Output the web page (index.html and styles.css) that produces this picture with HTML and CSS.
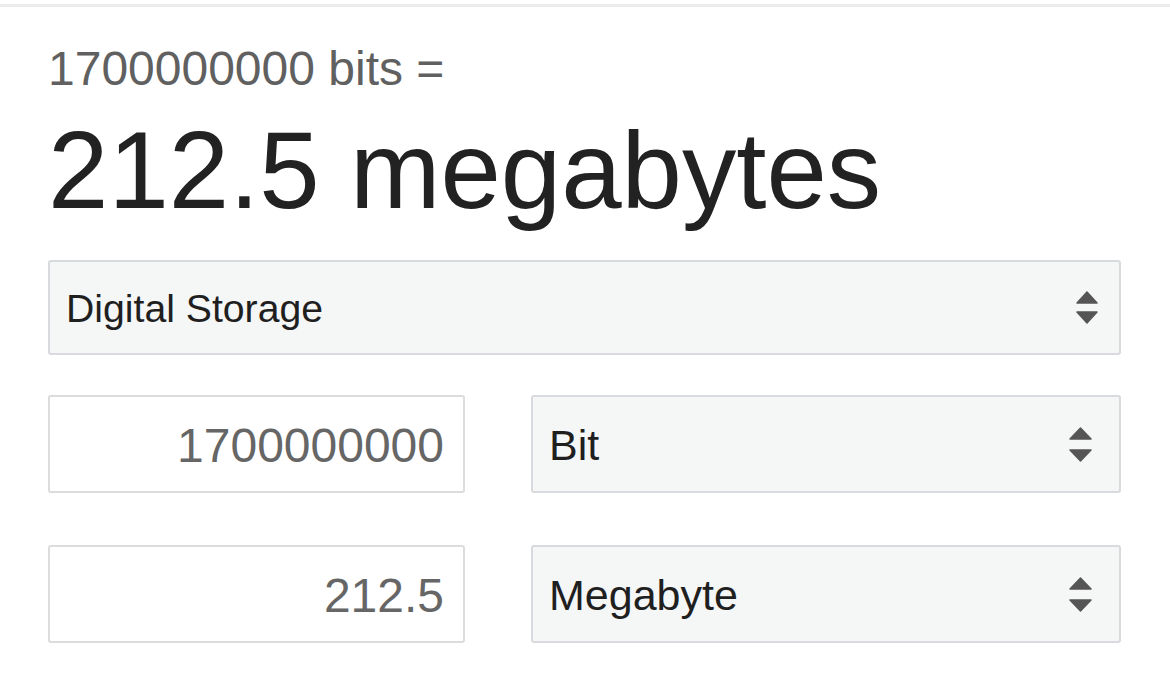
FILE: index.html
```html
<!DOCTYPE html>
<html>
<head>
<meta charset="utf-8">
<link rel="stylesheet" href="styles.css">
</head>
<body>
<div class="topline"></div>
<div class="card">
  <div class="formula">1700000000 bits =</div>
  <div class="result">212.5 megabytes</div>
  <div class="select select-main">
    <span class="select-text">Digital Storage</span>
    <svg class="arrows" width="22" height="33" viewBox="0 0 22 33"><path d="M11 1 L21 12 L1 12 Z" fill="#555" stroke="#555" stroke-width="1.5" stroke-linejoin="round"/><path d="M1 21 L21 21 L11 32 Z" fill="#555" stroke="#555" stroke-width="1.5" stroke-linejoin="round"/></svg>
  </div>
  <div class="row row-first">
    <div class="num">1700000000</div>
    <div class="select select-unit">
      <span class="select-text">Bit</span>
      <svg class="arrows" width="23" height="35" viewBox="0 0 23 35"><path d="M11.5 1 L22 12 L1 12 Z" fill="#555" stroke="#555" stroke-width="1.5" stroke-linejoin="round"/><path d="M1 23 L22 23 L11.5 34 Z" fill="#555" stroke="#555" stroke-width="1.5" stroke-linejoin="round"/></svg>
    </div>
  </div>
  <div class="row row-second">
    <div class="num">212.5</div>
    <div class="select select-unit">
      <span class="select-text">Megabyte</span>
      <svg class="arrows" width="23" height="35" viewBox="0 0 23 35"><path d="M11.5 1 L22 12 L1 12 Z" fill="#555" stroke="#555" stroke-width="1.5" stroke-linejoin="round"/><path d="M1 23 L22 23 L11.5 34 Z" fill="#555" stroke="#555" stroke-width="1.5" stroke-linejoin="round"/></svg>
    </div>
  </div>
</div>
</body>
</html>
```
FILE: styles.css
```css
html, body {
  margin: 0;
  padding: 0;
  background: #fff;
}
body {
  font-family: "Liberation Sans", Arial, sans-serif;
  width: 1170px;
  height: 678px;
  overflow: hidden;
}
.topline {
  margin-top: 4px;
  height: 3px;
  background: #ececec;
}
.card {
  padding: 34px 49px 0 48px;
  display: flex;
  flex-direction: column;
}
.formula {
  font-size: 48px;
  line-height: 56px;
  color: #606060;
}
.result {
  margin-top: 14px;
  font-size: 108.6px;
  line-height: 120px;
  color: #222;
}
.select {
  box-sizing: border-box;
  display: flex;
  align-items: center;
  justify-content: space-between;
  background: #f5f6f6;
  border: 2px solid #d9dadd;
  border-radius: 3px;
  color: #1f1f1f;
}
.select-main {
  margin-top: 29px;
  height: 95px;
  padding: 2px 21px 0 16px;
  font-size: 39.2px;
}
.select-unit {
  height: 98px;
  padding: 3px 27px 0 16px;
  font-size: 43px;
}
.arrows {
  display: block;
  flex: none;
  margin-top: -2px;
}
.row {
  display: grid;
  grid-template-columns: 417px 590px;
  column-gap: 66px;
}
.row-first {
  margin-top: 40px;
}
.row-second {
  margin-top: 52px;
}
.num {
  box-sizing: border-box;
  height: 98px;
  border: 2px solid #dcdcdc;
  border-radius: 3px;
  display: flex;
  align-items: center;
  justify-content: flex-end;
  padding: 3px 19px 0 0;
  font-size: 48px;
  color: #666;
  background: #fff;
}
```
